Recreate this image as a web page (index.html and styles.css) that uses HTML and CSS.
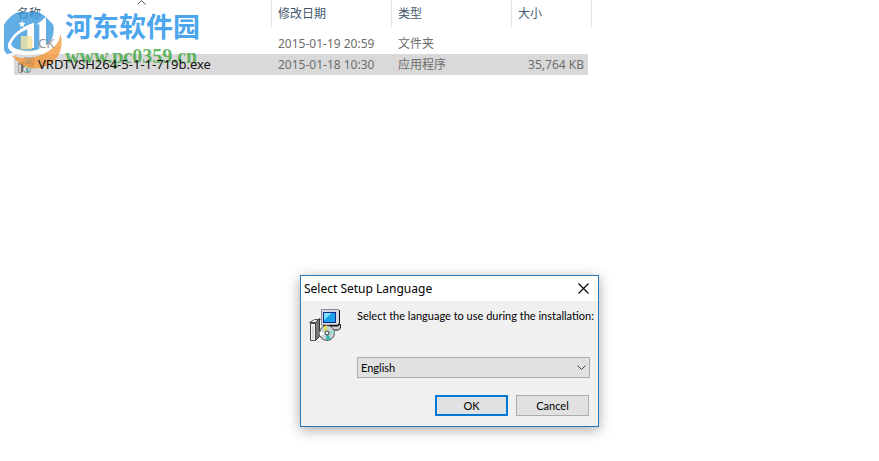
FILE: index.html
```html
<!DOCTYPE html>
<html lang="zh-CN">
  <head>
    <meta charset="UTF-8">
    <meta name="viewport" content="width=device-width, initial-scale=1.0">
    <title>Select Setup Language</title>
    <link rel="stylesheet" href="styles.css">
  </head>
  <body>
    <main class="explorer">
      <table class="file-list">
        <colgroup>
          <col class="col-name">
          <col class="col-date">
          <col class="col-type">
          <col class="col-size">
        </colgroup>
        <thead>
          <tr>
            <th class="sorted">名称
              <svg class="sort-arrow" width="9" height="5" viewBox="0 0 9 5"><path d="M.5 4.5l4-4 4 4" fill="none" stroke="#555"/></svg>
            </th>
            <th>修改日期</th>
            <th>类型</th>
            <th>大小</th>
          </tr>
        </thead>
        <tbody>
          <tr>
            <td>
              <div class="file">
                <svg class="file-icon" width="16" height="18" viewBox="0 0 16 18"><path d="M1 1h11l3 3v13H1z" fill="#f8df87"/><path d="M12 4h3v13h-3z" fill="#e9c35e"/></svg>
                <span class="file-name faded">CK</span>
              </div>
            </td>
            <td>2015-01-19 20:59</td>
            <td>文件夹</td>
            <td class="size"></td>
          </tr>
          <tr class="selected">
            <td>
              <div class="file">
                <svg class="file-icon" width="16" height="16"><use href="#setup-icon"/></svg>
                <span class="file-name">VRDTVSH264-5-1-1-719b.exe</span>
              </div>
            </td>
            <td>2015-01-18 10:30</td>
            <td>应用程序</td>
            <td class="size">35,764 KB</td>
          </tr>
        </tbody>
      </table>

      <div class="watermark">
        <svg class="watermark-logo" width="60" height="60" viewBox="6 12 180 180">
          <path d="M14 138A80 80 0 0 1 142 38Q152 46 158 58V96L112 130H60Z" fill="#3a9ade"/>
          <path d="M176 78Q190 150 128 176Q74 196 28 142Q70 160 116 142Q166 120 176 78Z" fill="#f59a3c"/>
          <path d="M18 108Q36 64 96 44V120H76V64Q40 78 28 106Q26 124 70 128Q98 130 112 122V48L102 50Q118 40 132 26V112Q160 94 154 48Q184 74 166 106Q138 142 74 142Q14 140 18 108Z" fill="#fff"/>
          <path d="M60 38l3 6 7 1-5 5 1 7-6-3-6 3 1-7-5-5 7-1z" fill="#fff"/>
          <path d="M56 84h34v40H56z" fill="#f8e9ae" opacity=".8"/>
        </svg>
        <div class="watermark-text">
          <span class="watermark-name">河东软件园</span>
          <span class="watermark-url">www.pc0359.cn</span>
        </div>
      </div>
    </main>

    <form class="dialog" role="dialog" aria-labelledby="dialogTitle">
      <div class="title-bar">
        <span id="dialogTitle">Select Setup Language</span>
        <button type="button" class="close-btn" aria-label="Close">
          <svg width="11" height="11" viewBox="0 0 11 11"><path d="M.5.5l10 10M10.5.5l-10 10" fill="none" stroke="#000" stroke-width="1.1"/></svg>
        </button>
      </div>
      <div class="dialog-body">
        <svg class="setup-icon" width="32" height="32" viewBox="0 0 32 32">
          <symbol id="setup-icon" viewBox="0 0 32 32">
            <path d="M12.5.5h17l1 1V14l-2 2h-16z" fill="#d8d8e0" stroke="#8a8a96"/>
            <path d="M30.5 1v13l-2 2.5H14" fill="none" stroke="#111"/>
            <rect x="14" y="3" width="13" height="11" fill="#0b2a8c"/>
            <path d="M15 4h11v9H15z" fill="#1aa0ec"/>
            <path d="M15 4h8l-8 7z" fill="#7be4ff"/>
            <path d="M20 17h9l2-2 .5.5V19l-2 2H20z" fill="#d0d0d0" stroke="#111"/>
            <path d="M.5 13.5l5-3h6l-4 3z" fill="#eee" stroke="#555"/>
            <path d="M6.5 13.5l4-4v18l-4 4z" fill="#777" stroke="#333"/>
            <path d="M1.5 14.5h5v17h-5z" fill="#f4f4f4" stroke="#444"/>
            <path d="M4 17v13" stroke="#bbb"/>
            <circle cx="18" cy="24" r="7.5" fill="#c7d2d2" stroke="#555"/>
            <path d="M18 24l-4-6 4-1.5z" fill="#f0df55"/>
            <path d="M18 24l7-3 .5 4z" fill="#8fdad6"/>
            <path d="M18 24l4 6-5 1z" fill="#28b9b1"/>
            <path d="M18 24l-7 3-.5-4z" fill="#fff"/>
            <circle cx="18" cy="24" r="2" fill="#fff" stroke="#333"/>
          </symbol>
          <use href="#setup-icon"/>
        </svg>
        <div class="dialog-fields">
          <label for="language">Select the language to use during the installation:</label>
          <div class="select-wrap">
            <select id="language">
              <option>English</option>
            </select>
            <svg class="chevron" width="9" height="6" viewBox="0 0 9 6"><path d="M.5.5l4 4 4-4" fill="none" stroke="#444"/></svg>
          </div>
          <div class="actions">
            <button type="submit" class="btn btn-default">OK</button>
            <button type="button" class="btn">Cancel</button>
          </div>
        </div>
      </div>
    </form>
  </body>
</html>
```

FILE: styles.css
```css
* {
  box-sizing: border-box;
}

body {
  margin: 0;
  min-height: 100vh;
  background: #fff;
  color: #000;
  font-family: "Noto Sans", "Noto Sans CJK SC", sans-serif;
  font-size: 12px;
}

.explorer {
  padding-left: 14px;
}

.file-list {
  width: 578px;
  table-layout: fixed;
  border-collapse: separate;
  border-spacing: 0;
}

.col-name {
  width: 258px;
}

.col-date,
.col-type {
  width: 120px;
}

.file-list th {
  height: 27px;
  padding: 0 3px;
  border-right: 1px solid #e2e2e2;
  color: #43586e;
  font-weight: 400;
  line-height: 27px;
  text-align: left;
}

.file-list th + th {
  padding-left: 6px;
}

.sorted {
  position: relative;
}

.sort-arrow {
  position: absolute;
  top: 0;
  left: 50%;
  margin-left: -6px;
}

/* gap between the header and the first row */
.file-list tbody::before {
  content: "";
  display: block;
  height: 6px;
}

.file-list td {
  height: 21px;
  padding: 0 6px;
  color: #6d6d6d;
  line-height: 21px;
  white-space: nowrap;
}

.file-list td:first-child {
  padding-left: 4px;
}

.file-list .size {
  padding-right: 4px;
  border-right: 4px solid transparent;
  background-clip: padding-box;
  text-align: right;
}

.selected td {
  background-color: #d9d9d9;
}

.file {
  display: flex;
  align-items: center;
  gap: 4px;
}

.file-icon {
  flex: none;
}

.file-name {
  position: relative;
  z-index: 2;
  color: #111;
  font-size: 13px;
}

.faded {
  color: #999;
}

.watermark {
  position: absolute;
  top: 12px;
  left: 4px;
  z-index: 1;
  display: flex;
  gap: 1px;
  opacity: 0.8;
}

.watermark-text {
  display: flex;
  flex-direction: column;
}

.watermark-name {
  color: #2090ea;
  font-size: 27px;
  font-weight: 700;
  line-height: 30px;
}

.watermark-url {
  color: #3fa83f;
  font-family: "Liberation Serif", serif;
  font-size: 20px;
  font-weight: 700;
  line-height: 28px;
}

.dialog {
  position: absolute;
  top: 275px;
  left: 300px;
  width: 299px;
  border: 1px solid #2878b8;
  background: #f0f0f0;
  box-shadow: 0 3px 12px rgba(0, 0, 0, 0.35);
  font-family: Lato, sans-serif;
  font-size: 11px;
}

.title-bar {
  display: flex;
  align-items: center;
  justify-content: space-between;
  height: 25px;
  padding: 0 3px;
  background: #fff;
  font-family: "Noto Sans", sans-serif;
  font-size: 12px;
}

.close-btn {
  display: flex;
  padding: 6px;
  border: none;
  background: none;
}

.dialog-body {
  display: flex;
  gap: 16px;
  padding: 8px 8px 10px;
}

.setup-icon {
  flex: none;
}

.dialog-fields {
  flex: 1;
  min-width: 0;
}

.dialog-fields label {
  display: block;
  line-height: 14px;
  white-space: nowrap;
}

.select-wrap {
  position: relative;
  margin-top: 34px;
}

.select-wrap select {
  display: block;
  width: 100%;
  height: 21px;
  padding: 0 3px;
  border: 1px solid #acacac;
  border-radius: 0;
  background: #e1e1e1;
  color: #000;
  font: inherit;
  appearance: none;
}

.chevron {
  position: absolute;
  top: 8px;
  right: 4px;
  pointer-events: none;
}

.actions {
  display: flex;
  justify-content: flex-end;
  gap: 8px;
  margin-top: 17px;
  padding-right: 1px;
}

.btn {
  width: 73px;
  height: 21px;
  padding: 0;
  border: 1px solid #acacac;
  background: #e1e1e1;
  color: #000;
  font: inherit;
}

.btn-default {
  border: 2px solid #0078d7;
}
```
